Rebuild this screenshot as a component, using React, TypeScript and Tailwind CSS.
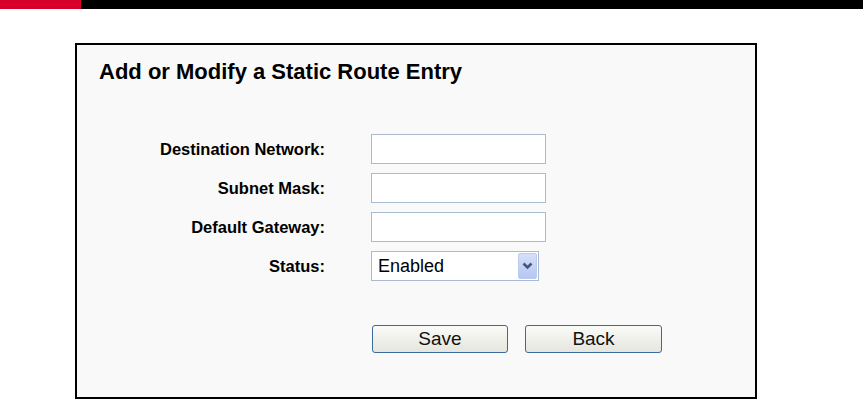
import React from "react";

const rows = ["Destination Network:", "Subnet Mask:", "Default Gateway:"];

export default function App() {
  return (
    <div className="min-h-[399px] bg-white font-['Liberation_Sans',Arial,sans-serif] text-black">
      <div className="flex h-[9px]">
        <div className="w-[81px] bg-[#d7002a]" />
        <div className="flex-1 bg-black" />
      </div>

      <div className="ml-[75px] mt-[34px] h-[356px] w-[682px] border-2 border-black bg-[#f9f9f9]">
        <h1 className="pl-[22px] pt-[14px] text-[22px] font-bold leading-[25px]">
          Add or Modify a Static Route Entry
        </h1>

        <div className="mt-[50px] grid grid-cols-[248px_auto] items-center gap-x-[46px] gap-y-[9px]">
          {rows.map((label) => (
            <React.Fragment key={label}>
              <div className="text-right text-[16.5px] font-bold leading-[30px]">
                {label}
              </div>
              <div className="h-[30px] w-[175px] border border-[#a8bbd3] bg-white" />
            </React.Fragment>
          ))}

          <div className="text-right text-[16.5px] font-bold leading-[30px]">
            Status:
          </div>
          <div className="flex h-[30px] w-[168px] items-center border border-[#a8bbd3] bg-white">
            <span className="flex-1 pl-[6px] text-[18px] leading-[28px]">
              Enabled
            </span>
            <div className="mr-[1px] flex h-[26px] w-[19px] items-center justify-center rounded-[2px] border border-[#bccbee] bg-gradient-to-b from-[#d6e0fa] to-[#b6c6f0]">
              <svg width="11" height="8" viewBox="0 0 11 8">
                <path
                  d="M1.5 1.5 L5.5 5.5 L9.5 1.5"
                  fill="none"
                  stroke="#43577e"
                  strokeWidth="2.6"
                />
              </svg>
            </div>
          </div>
        </div>

        <div className="ml-[295px] mt-[44px] flex gap-[17px]">
          <button className="h-[28px] w-[136px] rounded-[3px] border border-[#3d6a9c] bg-gradient-to-b from-[#fafaf7] to-[#e6e6df] text-[19px] leading-[24px] text-[#111]">
            Save
          </button>
          <button className="h-[28px] w-[137px] rounded-[3px] border border-[#3d6a9c] bg-gradient-to-b from-[#fafaf7] to-[#e6e6df] text-[19px] leading-[24px] text-[#111]">
            Back
          </button>
        </div>
      </div>
    </div>
  );
}
